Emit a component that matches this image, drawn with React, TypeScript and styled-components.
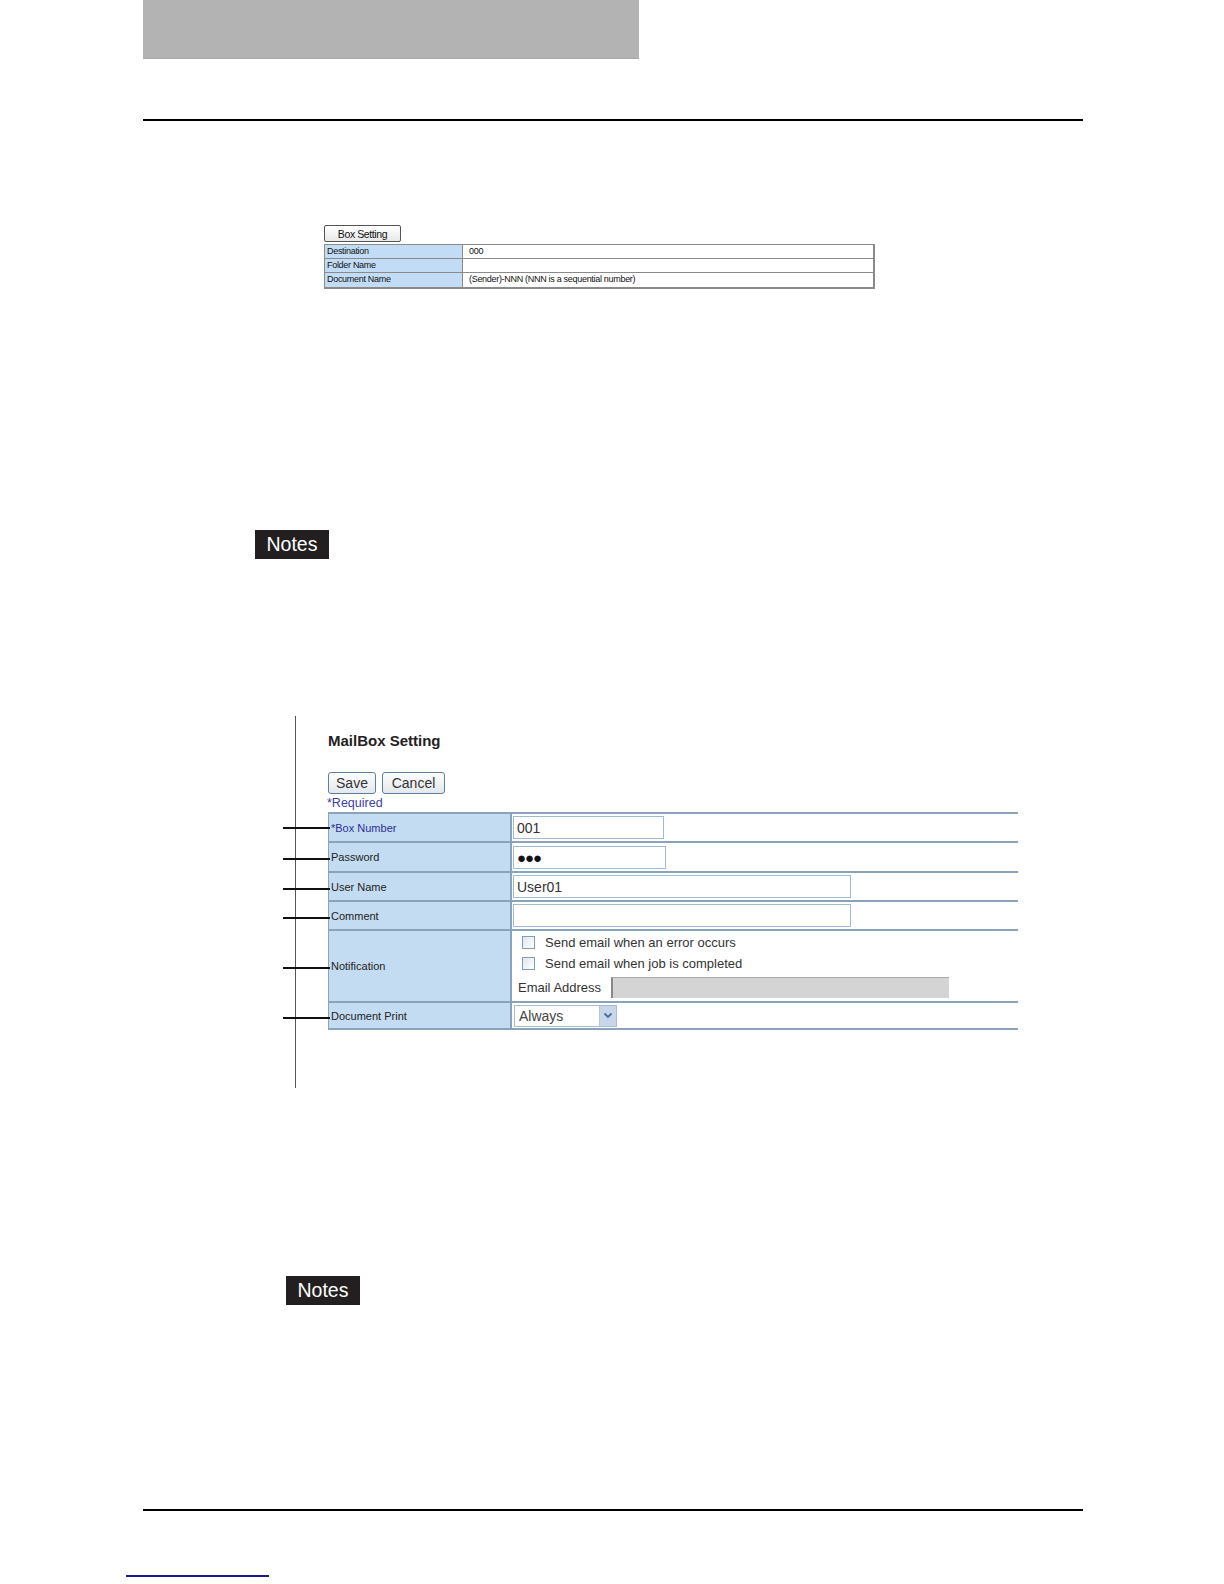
import React from "react";
import styled, { createGlobalStyle } from "styled-components";

const Global = createGlobalStyle`
  html, body { margin: 0; padding: 0; background: #fff; }
  body { font-family: "Liberation Sans", Arial, sans-serif; }
`;

const Page = styled.div`
  width: 1224px;
  min-height: 1584px;
  display: flex;
  flex-direction: column;
  align-items: flex-start;
`;

const HeaderBlock = styled.div`
  margin-left: 143px;
  width: 496px;
  height: 59px;
  background: #b3b3b3;
  border-bottom: 1px solid #a8a8a8;
  box-sizing: border-box;
`;

const Rule = styled.div<{ $top: number }>`
  margin: ${(p) => p.$top}px 0 0 143px;
  width: 940px;
  height: 2px;
  background: #000;
`;

/* ---------- small Box Setting figure ---------- */
const BoxFigure = styled.div`
  margin: 104px 0 0 324px;
  display: flex;
  flex-direction: column;
  align-items: flex-start;
`;

const SmallButton = styled.div`
  width: 77px;
  height: 17px;
  box-sizing: border-box;
  border: 1px solid #555;
  border-radius: 2px;
  background: linear-gradient(#ffffff, #e8e8e8);
  font-size: 10.5px;
  letter-spacing: -0.4px;
  color: #111;
  display: flex;
  align-items: center;
  justify-content: center;
`;

const SmallTable = styled.div`
  margin-top: 2px;
  width: 551px;
  box-sizing: border-box;
  border: 1px solid #8a8a8a;
  border-bottom-width: 2px;
  border-right-width: 2px;
  display: grid;
  grid-template-columns: 138px 1fr;
`;

const SmallLabel = styled.div<{ $last?: boolean }>`
  height: 14px;
  box-sizing: border-box;
  background: #c3dcf6;
  border-bottom: ${(p) => (p.$last ? "none" : "1px solid #8a8a8a")};
  border-right: 1px solid #8a8a8a;
  font-size: 9px;
  letter-spacing: -0.3px;
  color: #111;
  padding-left: 2px;
  line-height: 13px;
`;

const SmallValue = styled.div<{ $last?: boolean }>`
  height: 14px;
  box-sizing: border-box;
  background: #fff;
  border-bottom: ${(p) => (p.$last ? "none" : "1px solid #8a8a8a")};
  font-size: 9px;
  letter-spacing: -0.3px;
  color: #111;
  padding-left: 6px;
  line-height: 13px;
`;

/* ---------- Notes tag ---------- */
const NotesTag = styled.div<{ $top: number; $left: number }>`
  margin: ${(p) => p.$top}px 0 0 ${(p) => p.$left}px;
  width: 74px;
  height: 29px;
  background: #231f20;
  color: #fff;
  font-size: 19.5px;
  display: flex;
  align-items: center;
  justify-content: center;
`;

/* ---------- MailBox figure ---------- */
const MailFigure = styled.div`
  margin: 157px 0 0 295px;
  height: 372px;
  width: 723px;
  box-sizing: border-box;
  border-left: 1px solid #555;
  padding-left: 32px;
  display: flex;
  flex-direction: column;
  align-items: flex-start;
`;

const Title = styled.div`
  margin-top: 16px;
  font-size: 15px;
  line-height: 18px;
  font-weight: bold;
  color: #222;
`;

const ButtonRow = styled.div`
  margin-top: 22px;
  display: flex;
  gap: 6px;
`;

const FormButton = styled.div<{ $w: number }>`
  width: ${(p) => p.$w}px;
  height: 22px;
  box-sizing: border-box;
  border: 1px solid #5e7e9e;
  border-radius: 3px;
  background: linear-gradient(#fdfdfd, #e4e8ec);
  font-size: 14px;
  color: #333;
  display: flex;
  align-items: center;
  justify-content: center;
`;

const Required = styled.div`
  margin: 1px 0 1px -1px;
  font-size: 12.5px;
  line-height: 16px;
  color: #3c3ca8;
`;

const FormTable = styled.div`
  width: 690px;
  display: grid;
  grid-template-columns: 184px 1fr;
  border-bottom: 2px solid #8ba2bb;
`;

const LabelCell = styled.div<{ $h: number; $blue?: boolean }>`
  position: relative;
  height: ${(p) => p.$h}px;
  box-sizing: border-box;
  background: #c4dcf1;
  border-top: 2px solid #8ba2bb;
  border-left: 1px solid #8ba2bb;
  border-right: 2px solid #8ba2bb;
  font-size: 11px;
  color: ${(p) => (p.$blue ? "#2c2c9a" : "#222")};
  display: flex;
  align-items: center;
  padding-left: 2px;
  &::before {
    content: "";
    position: absolute;
    left: -46px;
    top: calc(50% + ${(p) => (p.$blue ? -1 : 1)}px);
    width: 47px;
    height: 2px;
    background: #111;
  }
`;

const ValueCell = styled.div<{ $h: number; $top?: boolean }>`
  height: ${(p) => p.$h}px;
  box-sizing: border-box;
  border-top: 2px solid #8ba2bb;
  padding-left: 1px;
  padding-top: ${(p) => (p.$top ? 1 : 0)}px;
  display: flex;
  flex-direction: column;
  justify-content: ${(p) => (p.$top ? "flex-start" : "center")};
  align-items: flex-start;
`;

const TextBox = styled.div<{ $w: number }>`
  width: ${(p) => p.$w}px;
  height: 23px;
  box-sizing: border-box;
  border: 1px solid #9fbad6;
  background: #fff;
  font-size: 14px;
  color: #333;
  padding-left: 3px;
  display: flex;
  align-items: center;
`;

const Dots = styled.span`
  font-size: 15px;
  letter-spacing: -1px;
  color: #111;
`;

const CheckLine = styled.div`
  display: flex;
  align-items: center;
  height: 21px;
  padding-left: 9px;
  gap: 10px;
  font-size: 13px;
  color: #333;
`;

const CheckBox = styled.div`
  width: 13px;
  height: 13px;
  box-sizing: border-box;
  border: 1px solid #7f9db9;
  background: linear-gradient(135deg, #dfe6ee, #ffffff);
`;

const EmailLine = styled.div`
  display: flex;
  align-items: center;
  gap: 10px;
  padding-left: 5px;
  font-size: 13px;
  color: #333;
  height: 26px;
`;

const GrayInput = styled.div`
  width: 338px;
  height: 21px;
  box-sizing: border-box;
  background: #d4d4d4;
  border-left: 2px solid #888;
  border-top: 1px solid #aaa;
`;

const Select = styled.div`
  margin-left: 1px;
  width: 103px;
  height: 22px;
  box-sizing: border-box;
  border: 1px solid #a8bdd4;
  background: #fff;
  display: flex;
  align-items: center;
  justify-content: space-between;
  font-size: 14px;
  color: #444;
  padding-left: 4px;
`;

const SelectArrow = styled.div`
  width: 16px;
  height: 20px;
  background: #c7d6ea;
  border-left: 1px solid #b3c6dc;
  display: flex;
  align-items: center;
  justify-content: center;
`;

const LinkLine = styled.div`
  margin: 64px 0 0 126px;
  width: 143px;
  height: 2px;
  background: #1a1a8c;
`;

export default function App() {
  return (
    <>
      <Global />
      <Page>
        <HeaderBlock />
        <Rule $top={60} />

        <BoxFigure>
          <SmallButton>Box Setting</SmallButton>
          <SmallTable>
            <SmallLabel>Destination</SmallLabel>
            <SmallValue>000</SmallValue>
            <SmallLabel>Folder Name</SmallLabel>
            <SmallValue />
            <SmallLabel $last>Document Name</SmallLabel>
            <SmallValue $last>(Sender)-NNN (NNN is a sequential number)</SmallValue>
          </SmallTable>
        </BoxFigure>

        <NotesTag $top={241} $left={255}>Notes</NotesTag>

        <MailFigure>
          <Title>MailBox Setting</Title>
          <ButtonRow>
            <FormButton $w={48}>Save</FormButton>
            <FormButton $w={63}>Cancel</FormButton>
          </ButtonRow>
          <Required>*Required</Required>
          <FormTable>
            <LabelCell $h={29} $blue>*Box Number</LabelCell>
            <ValueCell $h={29}>
              <TextBox $w={151}>001</TextBox>
            </ValueCell>

            <LabelCell $h={30}>Password</LabelCell>
            <ValueCell $h={30}>
              <TextBox $w={153}><Dots>●●●</Dots></TextBox>
            </ValueCell>

            <LabelCell $h={29}>User Name</LabelCell>
            <ValueCell $h={29}>
              <TextBox $w={338}>User01</TextBox>
            </ValueCell>

            <LabelCell $h={29}>Comment</LabelCell>
            <ValueCell $h={29}>
              <TextBox $w={338} />
            </ValueCell>

            <LabelCell $h={72}>Notification</LabelCell>
            <ValueCell $h={72} $top>
              <CheckLine><CheckBox />Send email when an error occurs</CheckLine>
              <CheckLine><CheckBox />Send email when job is completed</CheckLine>
              <EmailLine>Email Address<GrayInput /></EmailLine>
            </ValueCell>

            <LabelCell $h={27}>Document Print</LabelCell>
            <ValueCell $h={27}>
              <Select>
                Always
                <SelectArrow>
                  <svg width="10" height="7" viewBox="0 0 10 7">
                    <path d="M1.5 1.5 L5 5 L8.5 1.5" fill="none" stroke="#4a6a9a" strokeWidth="1.8" />
                  </svg>
                </SelectArrow>
              </Select>
            </ValueCell>
          </FormTable>
        </MailFigure>

        <NotesTag $top={188} $left={286}>Notes</NotesTag>

        <Rule $top={204} />
        <LinkLine />
      </Page>
    </>
  );
}
